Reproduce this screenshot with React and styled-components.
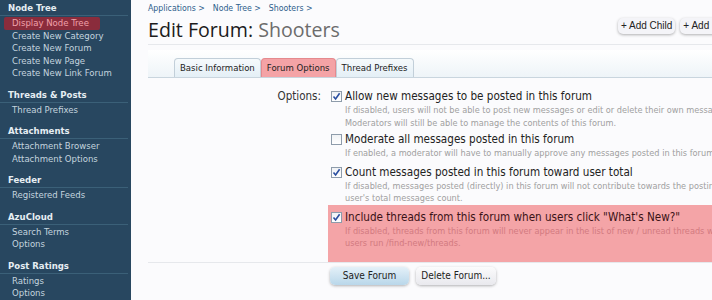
import React from "react";
import styled, { createGlobalStyle } from "styled-components";

const GlobalStyle = createGlobalStyle`
  html, body {
    margin: 0;
    padding: 0;
    background: #fbfbfd;
    font-family: "DejaVu Sans Condensed", "DejaVu Sans", sans-serif;
    overflow: hidden;
  }
`;

const Page = styled.div`
  display: flex;
  width: 712px;
  height: 300px;
  overflow: hidden;
`;

const Sidebar = styled.nav`
  width: 131px;
  flex-shrink: 0;
  background: #284760;
  padding: 2px 0 0 0;
  box-sizing: border-box;
`;

const Section = styled.div`
  margin-bottom: 9px;
`;

const SectionTitle = styled.div`
  font-size: 9.5px;
  font-weight: bold;
  color: #e6eef3;
  padding: 0 0 1px 8px;
  line-height: 12px;
  margin: 0 3px 1px 0;
  border-bottom: 1px solid #3b6078;
`;

const NavItem = styled.div`
  font-size: 9.5px;
  line-height: 12.5px;
  margin: 0 31px 0 4px;
  padding-left: 8px;
  color: ${(p) => (p.$active ? "#f0a0aa" : "#c4d4df")};
  background: ${(p) => (p.$active ? "#8a2c3c" : "transparent")};
  border-radius: 2px;
  white-space: nowrap;
`;

const Main = styled.main`
  flex: 0 0 624px;
  box-sizing: border-box;
  padding: 2px 10px 0 17px;
`;

const Breadcrumb = styled.div`
  display: flex;
  gap: 8px;
  font-size: 8.7px;
  color: #2e5e8c;
  line-height: 12px;
`;

const TitleRow = styled.div`
  display: flex;
  justify-content: space-between;
  border-bottom: 1px solid #e6e8ec;
  height: 30px;
`;

const Title = styled.h1`
  margin: 0;
  align-self: flex-end;
  margin-bottom: 2px;
  font-family: "Open Sans", sans-serif;
  font-weight: normal;
  font-size: 19.6px;
  line-height: 24px;
  color: #1c1c1c;
  white-space: nowrap;
  span {
    color: #6c6c6c;
  }
`;

const TopButtons = styled.div`
  display: flex;
  gap: 5px;
  margin-top: 4px;
  align-self: flex-start;
  white-space: nowrap;
`;

const SmallButton = styled.div`
  font-size: 10px;
  font-family: "Liberation Sans", sans-serif;
  color: #222;
  background: #f4f4f8;
  border-radius: 5px;
  padding: 2px 3px;
  line-height: 12px;
  box-shadow: 0 1px 3px rgba(0, 0, 0, 0.3);
`;

const TabStrip = styled.div`
  margin-top: 5px;
  height: 27px;
  display: flex;
  align-items: flex-end;
  padding-left: 26px;
  background: linear-gradient(#ffffff, #eef4f8);
  border-bottom: 1px solid #c9d5de;
`;

const Tab = styled.div`
  font-size: 9.5px;
  line-height: 18px;
  padding: 0 5px;
  color: #222;
  border: 1px solid ${(p) => (p.$active ? "#e58a8e" : "#c2cfd9")};
  border-bottom: none;
  border-radius: 4px 4px 0 0;
  background: ${(p) =>
    p.$active ? "#f4a3a6" : "linear-gradient(#f6fafc, #e4eff6)"};
  white-space: nowrap;
`;

const Form = styled.div`
  display: grid;
  grid-template-columns: 180px 1fr;
  border-bottom: 1px solid #e6e8ec;
  margin-top: 11px;
`;

const FieldLabel = styled.div`
  font-size: 11.5px;
  color: #333;
  text-align: right;
  padding: 0 7px 0 0;
  line-height: 15px;
`;

const Options = styled.div`
  display: flex;
  flex-direction: column;
  min-width: 0;
`;

const Option = styled.div`
  padding: ${(p) => (p.$highlight ? "5px 3px 12px" : "0 3px")};
  background: ${(p) => (p.$highlight ? "#f4a4a7" : "transparent")};
  margin-top: ${(p) => p.$gap || 0}px;
`;

const CheckRow = styled.div`
  display: flex;
  align-items: center;
  gap: 3px;
  white-space: nowrap;
`;

const Box = styled.span`
  width: 11px;
  height: 11px;
  flex-shrink: 0;
  border: 1px solid #8e9cab;
  background: linear-gradient(#f0f2f5, #ffffff);
  box-sizing: border-box;
  display: flex;
  align-items: center;
  justify-content: center;
`;

const OptionText = styled.span`
  font-size: 11.6px;
  line-height: 15px;
  color: ${(p) => (p.$highlight ? "#3a1216" : "#222")};
`;

const Hint = styled.div`
  font-size: 9.1px;
  line-height: 12.5px;
  color: ${(p) => (p.$highlight ? "#d27a80" : "#a0a0a0")};
  padding-left: 14px;
  white-space: nowrap;
`;

const ButtonRow = styled.div`
  display: flex;
  gap: 7px;
  padding: 4px 0 0 182px;
`;

const FormButton = styled.div`
  font-size: 10px;
  color: #222;
  line-height: 18px;
  width: ${(p) => p.$w}px;
  text-align: center;
  border-radius: 5px;
  background: ${(p) =>
    p.$primary
      ? "linear-gradient(#e4f0f8, #b9d7ea)"
      : "linear-gradient(#fbfbfc, #e9e9ee)"};
  box-shadow: 0 1px 3px rgba(0, 0, 0, 0.3);
`;

const Check = () => (
  <svg width="9" height="9" viewBox="0 0 9 9">
    <path d="M1.5 4.5 L3.6 7 L7.6 1.2" fill="none" stroke="#2a4ea0" strokeWidth="1.6" />
  </svg>
);

const nav = [
  {
    title: "Node Tree",
    items: [
      "Display Node Tree",
      "Create New Category",
      "Create New Forum",
      "Create New Page",
      "Create New Link Forum",
    ],
  },
  { title: "Threads & Posts", items: ["Thread Prefixes"] },
  { title: "Attachments", items: ["Attachment Browser", "Attachment Options"] },
  { title: "Feeder", items: ["Registered Feeds"] },
  { title: "AzuCloud", items: ["Search Terms", "Options"] },
  { title: "Post Ratings", items: ["Ratings", "Options"] },
];

const options = [
  {
    label: "Allow new messages to be posted in this forum",
    checked: true,
    hint: [
      "If disabled, users will not be able to post new messages or edit or delete their own messages in this forum.",
      "Moderators will still be able to manage the contents of this forum.",
    ],
  },
  {
    label: "Moderate all messages posted in this forum",
    checked: false,
    gap: 3,
    hint: [
      "If enabled, a moderator will have to manually approve any messages posted in this forum.",
    ],
  },
  {
    label: "Count messages posted in this forum toward user total",
    checked: true,
    gap: 5,
    hint: [
      "If disabled, messages posted (directly) in this forum will not contribute towards the posting",
      "user's total messages count.",
    ],
  },
  {
    label: 'Include threads from this forum when users click "What\'s New?"',
    checked: true,
    highlight: true,
    hint: [
      "If disabled, threads from this forum will never appear in the list of new / unread threads when",
      "users run /find-new/threads.",
    ],
  },
];

export default function App() {
  return (
    <Page>
      <GlobalStyle />
      <Sidebar>
        {nav.map((s) => (
          <Section key={s.title}>
            <SectionTitle>{s.title}</SectionTitle>
            {s.items.map((it, i) => (
              <NavItem key={i} $active={it === "Display Node Tree"}>
                {it}
              </NavItem>
            ))}
          </Section>
        ))}
      </Sidebar>
      <Main>
        <Breadcrumb>
          <span>Applications &gt;</span>
          <span>Node Tree &gt;</span>
          <span>Shooters &gt;</span>
        </Breadcrumb>
        <TitleRow>
          <Title>
            Edit Forum: <span>Shooters</span>
          </Title>
          <TopButtons>
            <SmallButton>+ Add Child</SmallButton>
            <SmallButton>+ Add Sibling</SmallButton>
          </TopButtons>
        </TitleRow>
        <TabStrip>
          <Tab>Basic Information</Tab>
          <Tab $active>Forum Options</Tab>
          <Tab>Thread Prefixes</Tab>
        </TabStrip>
        <Form>
          <FieldLabel>Options:</FieldLabel>
          <Options>
            {options.map((o, i) => (
              <Option key={i} $highlight={o.highlight} $gap={o.gap}>
                <CheckRow>
                  <Box>{o.checked && <Check />}</Box>
                  <OptionText $highlight={o.highlight}>{o.label}</OptionText>
                </CheckRow>
                {o.hint.map((h, j) => (
                  <Hint key={j} $highlight={o.highlight}>
                    {h}
                  </Hint>
                ))}
              </Option>
            ))}
          </Options>
        </Form>
        <ButtonRow>
          <FormButton $primary $w={79}>Save Forum</FormButton>
          <FormButton $w={80}>Delete Forum...</FormButton>
        </ButtonRow>
      </Main>
    </Page>
  );
}
